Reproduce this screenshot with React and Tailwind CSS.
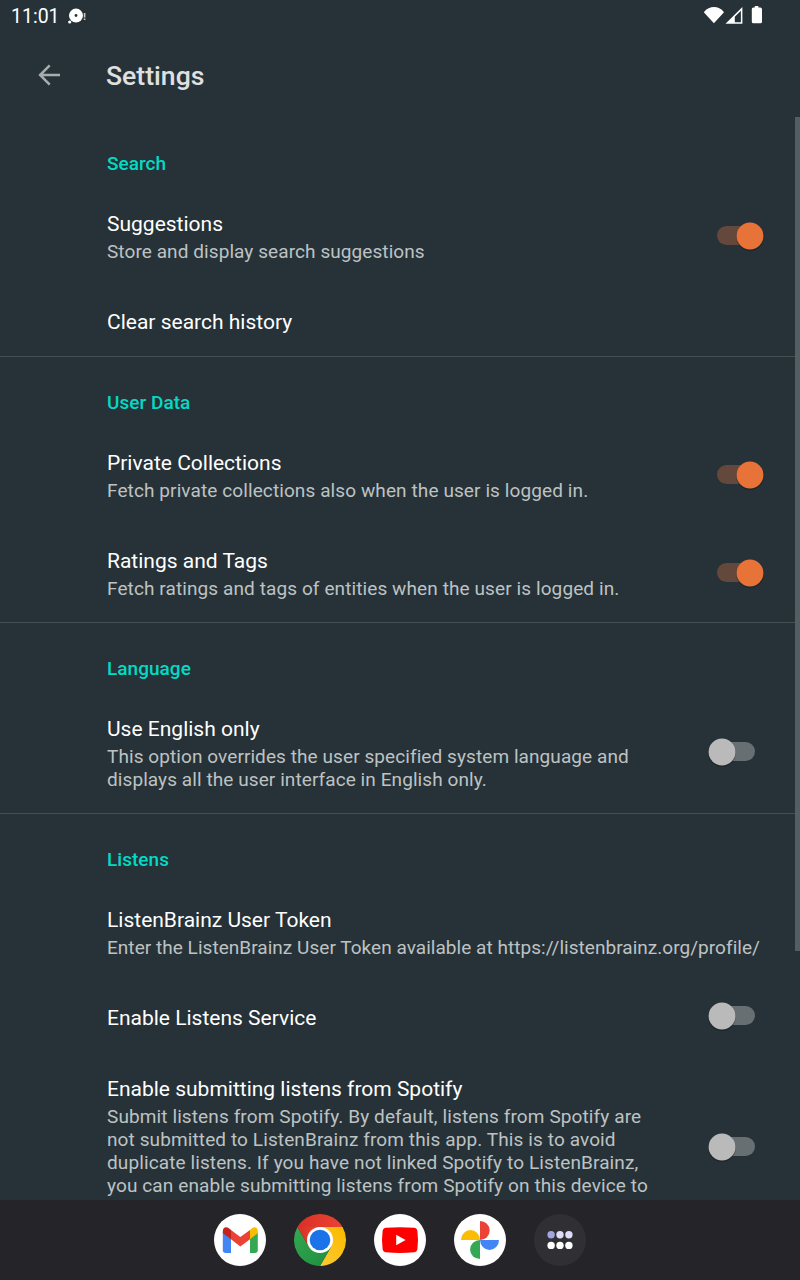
import React from "react";

const sections = [
  {
    title: "Search",
    items: [
      { title: "Suggestions", lines: ["Store and display search suggestions"], on: true },
      { title: "Clear search history" },
    ],
  },
  {
    title: "User Data",
    items: [
      { title: "Private Collections", lines: ["Fetch private collections also when the user is logged in."], tracking: "tracking-[0.1px]", on: true },
      { title: "Ratings and Tags", lines: ["Fetch ratings and tags of entities when the user is logged in."], tracking: "tracking-[0.1px]", on: true },
    ],
  },
  {
    title: "Language",
    items: [
      {
        title: "Use English only",
        lines: ["This option overrides the user specified system language and", "displays all the user interface in English only."],
        on: false,
      },
    ],
  },
  {
    title: "Listens",
    items: [
      {
        title: "ListenBrainz User Token",
        lines: ["Enter the ListenBrainz User Token available at https://listenbrainz.org/profile/"],
        tracking: "tracking-[0.04px]",
      },
      { title: "Enable Listens Service", on: false },
      {
        title: "Enable submitting listens from Spotify",
        lines: [
          "Submit listens from Spotify. By default, listens from Spotify are",
          "not submitted to ListenBrainz from this app. This is to avoid",
          "duplicate listens. If you have not linked Spotify to ListenBrainz,",
          "you can enable submitting listens from Spotify on this device to",
        ],
        tracking: "pb-[25px] tracking-[0.11px]",
        on: false,
      },
    ],
  },
];

function Toggle({ on }) {
  return (
    <svg className="block h-8 w-16 shrink-0" viewBox="0 0 64 32" role="switch" aria-checked={on}>
      <rect x="13" y="6" width="38" height="19" rx="9.5" fill={on ? "#64483c" : "#686f72"} />
      <circle cx={on ? 46 : 18} cy="17.2" r="13.8" fill="#000" opacity="0.22" />
      <circle cx={on ? 46 : 18} cy="16" r="13.4" fill={on ? "#e77339" : "#bababa"} />
    </svg>
  );
}

function Row({ item }) {
  return (
    <div className="flex shrink-0 items-center justify-between pr-[32px] pl-[107px]">
      <div className="pt-[22px] pb-[20px] whitespace-nowrap">
        <div className="text-[21px] leading-[29px] text-white">{item.title}</div>
        {item.lines && (
          <div className="mt-px pb-[3px] text-[19px] leading-[23px] text-[#bec2c3]">
            <div className={item.tracking || "tracking-[0.08px]"}>
              {item.lines.map((line) => (
                <div key={line}>{line}</div>
              ))}
            </div>
          </div>
        )}
      </div>
      {item.on !== undefined && (
        <div className={item.on ? "-mt-[2px]" : "-mt-[4px]"}>
          <Toggle on={item.on} />
        </div>
      )}
    </div>
  );
}

function Section({ section, first }) {
  return (
    <section className="shrink-0">
      <div className={first ? "flex h-[71px] items-end pl-[107px]" : "-mt-px flex h-[71px] items-end border-t border-[#444e53] pl-[107px]"}>
        <h2 className="pb-[12px] text-[19px] leading-6 font-medium tracking-[0.03px] text-[#03dac5]">{section.title}</h2>
      </div>
      {section.items.map((item) => (
        <Row key={item.title} item={item} />
      ))}
    </section>
  );
}

function StatusBar() {
  return (
    <div className="flex h-8 items-center justify-between pr-[37px] pl-[11px]">
      <div className="flex items-center">
        <span className="mt-[2px] text-[19.5px] leading-8 text-white">11:01</span>
        <svg className="ml-[7.5px] h-4 w-5" viewBox="0 0 20 16" fill="#fff">
          <circle cx="9" cy="7.6" r="7" />
          <circle cx="9" cy="7.5" r="1.4" fill="#263238" />
          <circle cx="2.7" cy="14" r="1.6" />
          <rect x="16.8" y="5" width="1.6" height="4.5" opacity="0.75" />
          <rect x="16.8" y="10.5" width="1.6" height="1.5" opacity="0.75" />
        </svg>
      </div>
      <svg className="h-5 w-[60px]" viewBox="0 0 60 20" fill="#fff">
        <path d="M0.8 6.2C6.5 -0.6 15.5 -0.6 21 6.2L10.9 17.3Z" />
        <path d="M22.5 17.7L39.4 1.1V17.7Z" />
        <path d="M31.8 16.2V10.7L37.9 4.8V16.2Z" fill="#263238" />
        <path d="M51.8 0H55.4V1.6H57.2Q59 1.6 59 3.3V15.7Q59 17.3 57.4 17.3H50.4Q48.8 17.3 48.8 15.7V3.3Q48.8 1.6 50.4 1.6H51.8Z" />
      </svg>
    </div>
  );
}

function Dock() {
  return (
    <nav className="flex h-20 shrink-0 items-center justify-center gap-7 bg-[#252529]">
      <svg className="size-[52px]" viewBox="0 0 52 52">
        <circle cx="26" cy="26" r="26" fill="#fff" />
        <path d="M8.8 18.5L17 24.5V39H11.2Q8.8 39 8.8 36.6Z" fill="#4285f4" />
        <path d="M43.8 18.5L36 24.5V39H41.4Q43.8 39 43.8 36.6Z" fill="#34a853" />
        <path d="M17 16L26.3 23L36 16V25.2L26.3 32.5L17 25.2Z" fill="#ea4335" />
        <path d="M8.8 17.3C8.8 12.9 12.4 12 15.2 14.5L17 16V25.2L8.8 19.2Z" fill="#c5221f" />
        <path d="M43.8 17.3C43.8 12.9 40.4 12 37.8 14.5L36 16V25.2L43.8 19.2Z" fill="#fbbc04" />
      </svg>
      <svg className="size-[52px]" viewBox="0 0 52 52">
        <defs>
          <linearGradient id="cr" x1="0" x2="1"><stop stopColor="#d93025" /><stop offset="1" stopColor="#ea4335" /></linearGradient>
          <linearGradient id="cg" x1="1" y1="1" x2="0" y2="0"><stop stopColor="#1e8e3e" /><stop offset="1" stopColor="#34a853" /></linearGradient>
          <linearGradient id="cy" x1="0" y1="1" x2="0.6" y2="0"><stop stopColor="#fcc934" /><stop offset="1" stopColor="#fbbc04" /></linearGradient>
        </defs>
        <path d="M26 26L3.48 13A26 26 0 0 1 48.52 13Z" fill="url(#cr)" />
        <path d="M26 13H48.52A26 26 0 0 1 26 52L37.26 32.5Z" fill="url(#cy)" />
        <path d="M3.48 13L14.74 32.5L26 39L37.26 32.5L26 52A26 26 0 0 1 3.48 13Z" fill="url(#cg)" />
        <path d="M3.48 13H26L14.74 32.5Z" fill="url(#cr)" />
        <circle cx="26" cy="26" r="13" fill="#fff" />
        <circle cx="26" cy="26" r="10.3" fill="#1a73e8" />
      </svg>
      <svg className="size-[52px]" viewBox="0 0 52 52">
        <circle cx="26" cy="26" r="26" fill="#fff" />
        <path d="M12 13.7Q26 12.7 40 13.7Q43.1 14 43.4 17Q44.6 26 43.4 35Q43.1 38 40 38.3Q26 39.5 12 38.3Q8.9 38 8.6 35Q7.4 26 8.6 17Q8.9 14 12 13.7Z" fill="#f00" />
        <path d="M22.2 20.8L31.6 26L22.2 31.3Z" fill="#fff" />
      </svg>
      <svg className="size-[52px]" viewBox="0 0 52 52">
        <circle cx="26" cy="26" r="26" fill="#fff" />
        <path d="M26 7A9.7 9.5 0 0 1 26 26Z" fill="#ea4335" />
        <path d="M45 26A9.5 9.9 0 0 1 26 26Z" fill="#4285f4" />
        <path d="M26 45A9.9 9.5 0 0 1 26 26Z" fill="#34a853" />
        <path d="M7 26A9.5 9.9 0 0 1 26 26Z" fill="#fbbc04" />
      </svg>
      <svg className="size-[52px]" viewBox="0 0 52 52" fill="#fff">
        <circle cx="26" cy="26" r="26" fill="#303034" />
        <circle cx="17.1" cy="20.8" r="3.7" fill="#a0a7e0" />
        <circle cx="26" cy="20.8" r="3.7" fill="#dedcf8" />
        <circle cx="34.9" cy="20.8" r="3.7" fill="#dedcf8" />
        <circle cx="17.1" cy="31.4" r="3.7" />
        <circle cx="26" cy="31.4" r="3.7" />
        <circle cx="34.9" cy="31.4" r="3.7" />
      </svg>
    </nav>
  );
}

export default function App() {
  return (
    <div className="flex h-[1280px] w-[800px] flex-col overflow-hidden bg-[#263238] font-[Roboto,sans-serif]">
      <header className="h-[117px] shrink-0">
        <StatusBar />
        <div className="flex h-[85px] items-center pl-[38px]">
          <svg className="h-[22px] w-[22px]" viewBox="0 0 22 22" fill="none" stroke="#a8adaf" strokeWidth="2.5">
            <path d="M22 11H2.2M11.7 1.4L2.1 11L11.7 20.6" />
          </svg>
          <h1 className="mt-[3px] ml-[46px] text-[26.6px] leading-8 font-medium text-[#e0e0e0]">Settings</h1>
        </div>
      </header>
      <main className="relative flex min-h-0 flex-1 flex-col overflow-hidden">
        {sections.map((section, i) => (
          <Section key={section.title} section={section} first={i === 0} />
        ))}
        <div className="absolute top-0 right-0 h-[834px] w-[5px] bg-[#545d62]" />
      </main>
      <Dock />
    </div>
  );
}
